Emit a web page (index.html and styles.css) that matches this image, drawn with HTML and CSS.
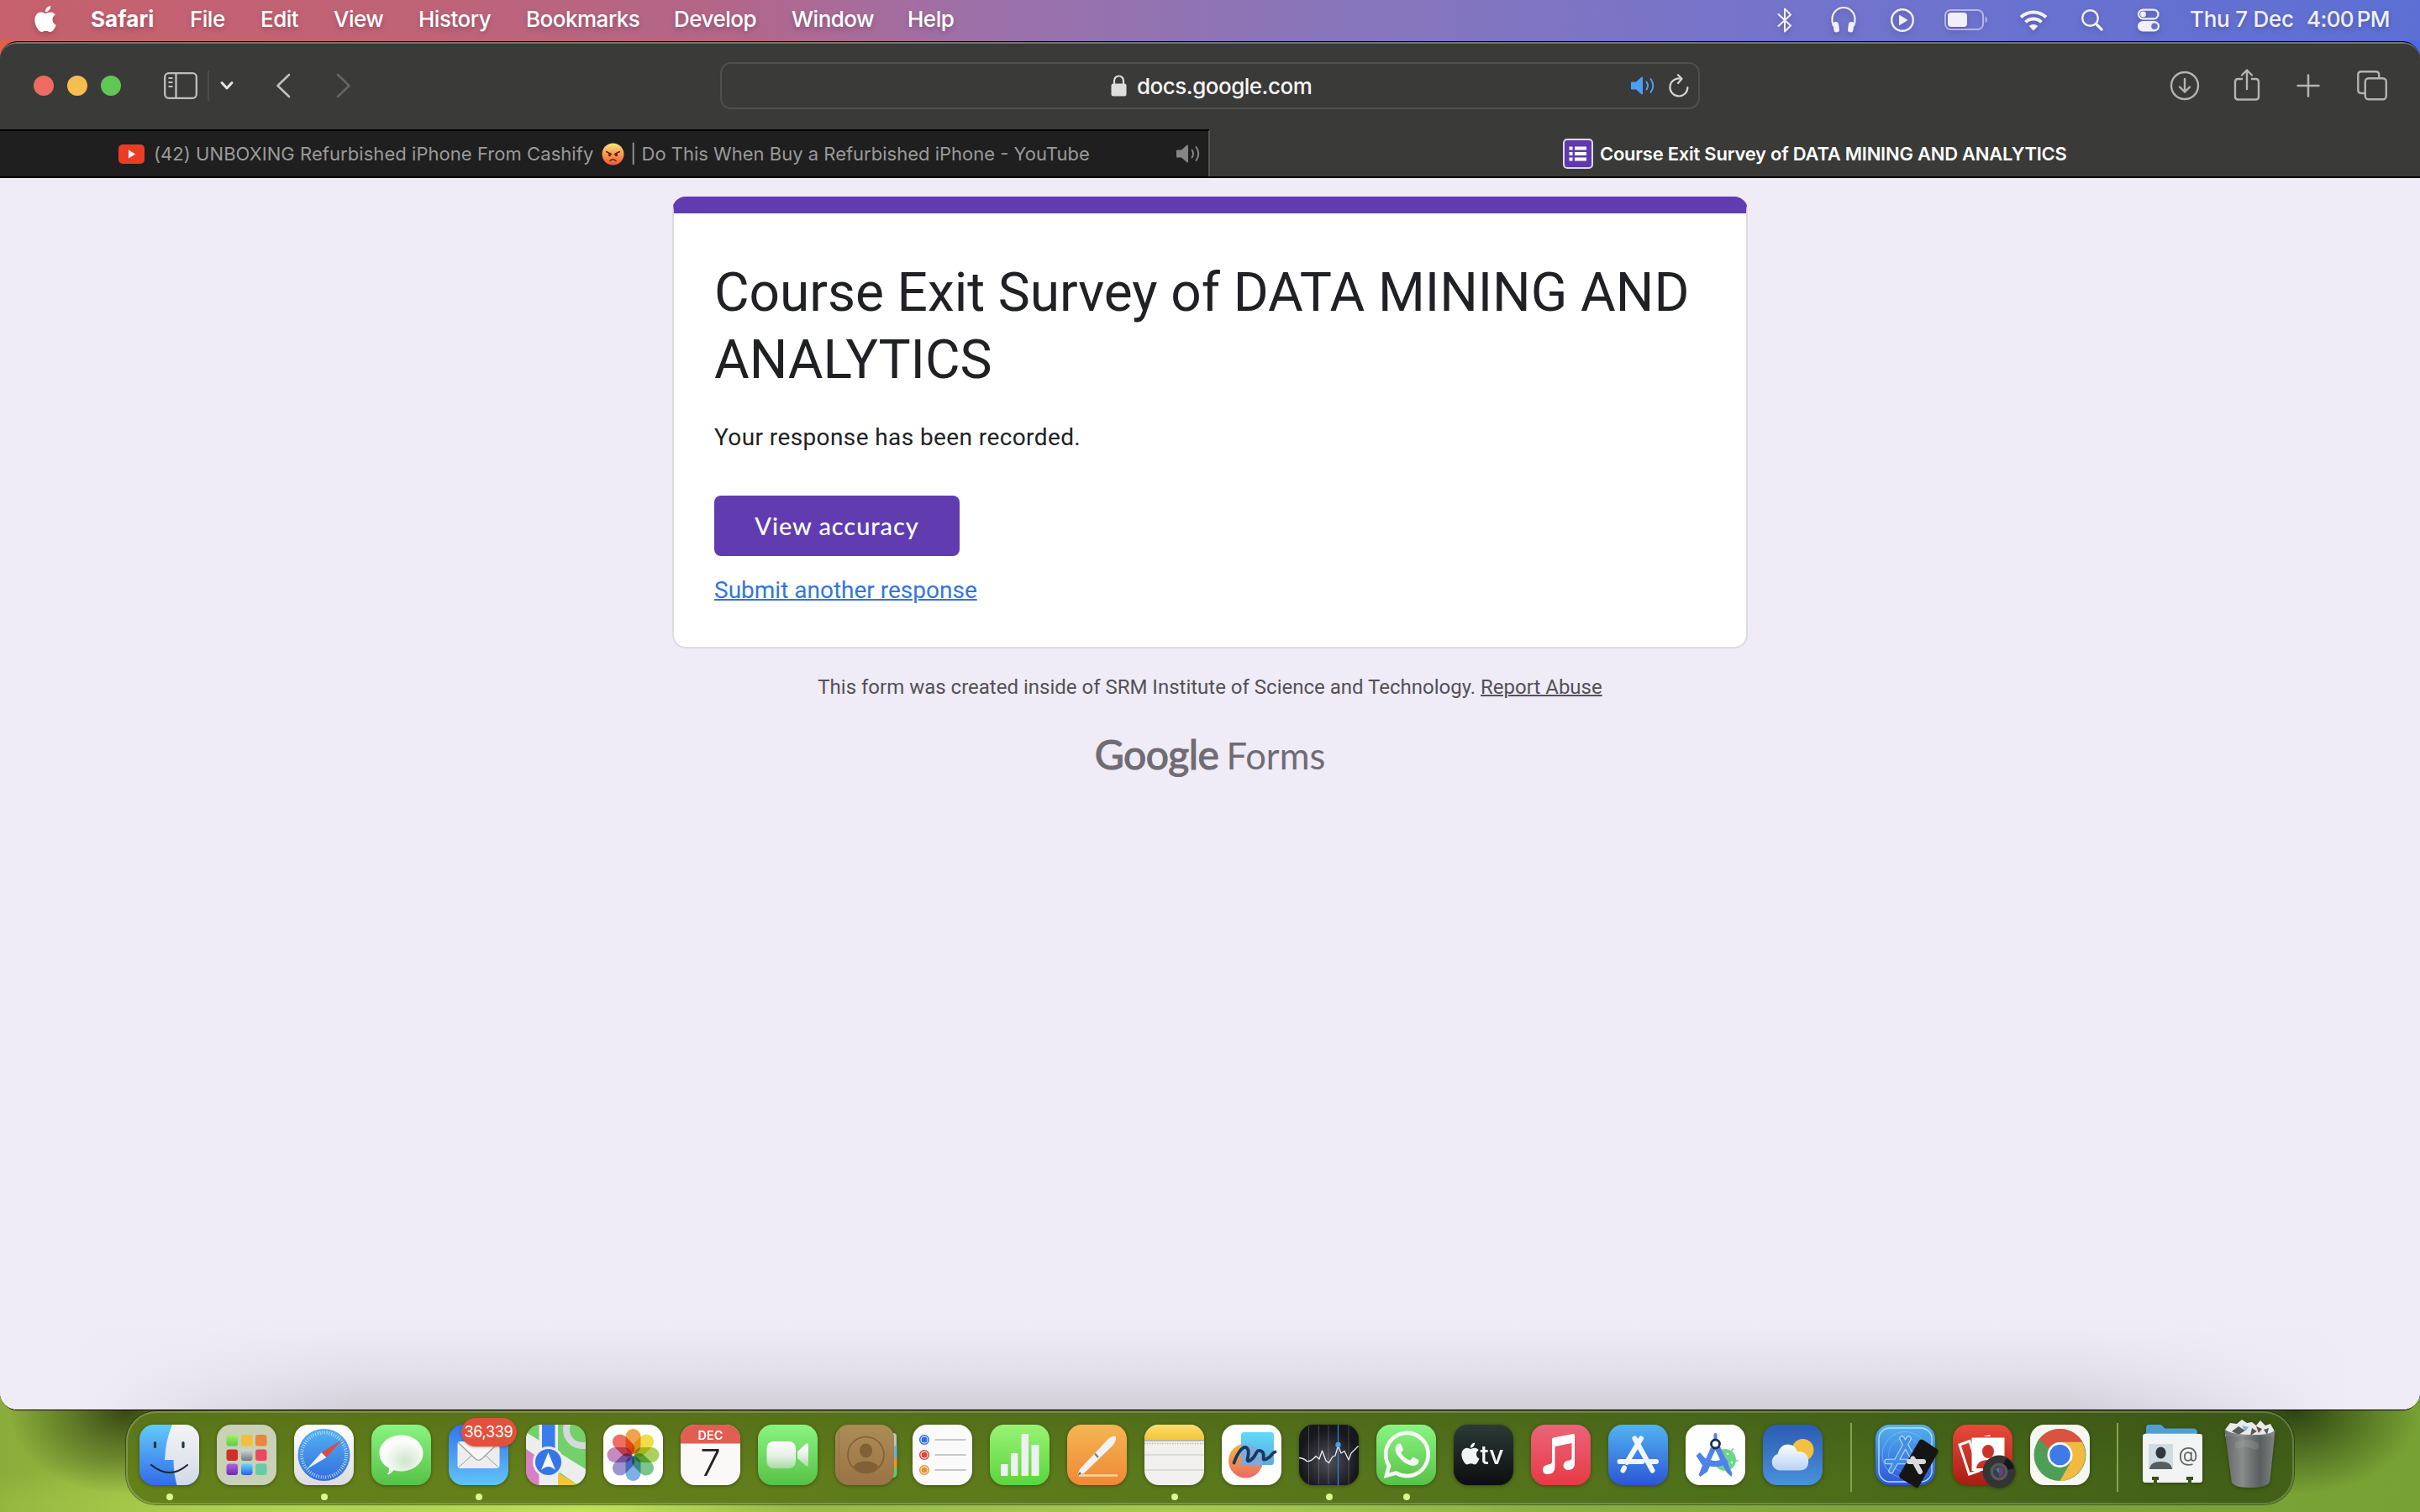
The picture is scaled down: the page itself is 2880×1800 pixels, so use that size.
FILE: index.html
```html
<!DOCTYPE html>
<html lang="en">
<head>
<meta charset="utf-8">
<title>Course Exit Survey of DATA MINING AND ANALYTICS</title>
<link rel="stylesheet" href="styles.css">
</head>
<body>
<svg class="defs" width="0" height="0" aria-hidden="true">
  <defs>
    <path id="apple" d="M12.152 6.896c-.948 0-2.415-1.078-3.96-1.04-2.04.027-3.91 1.183-4.961 3.014-2.117 3.675-.546 9.103 1.519 12.09 1.013 1.454 2.208 3.09 3.792 3.039 1.52-.065 2.09-.987 3.935-.987 1.831 0 2.35.987 3.96.948 1.637-.026 2.676-1.48 3.676-2.948 1.156-1.688 1.636-3.325 1.662-3.415-.039-.013-3.182-1.221-3.22-4.857-.026-3.04 2.48-4.494 2.597-4.559-1.429-2.09-3.623-2.324-4.39-2.376-2-.156-3.675 1.09-4.61 1.09zM15.53 3.83c.843-1.012 1.4-2.427 1.245-3.83-1.207.052-2.662.805-3.532 1.818-.78.896-1.454 2.338-1.273 3.714 1.338.104 2.715-.688 3.559-1.701"/>
    <g id="speaker">
      <path d="M0 7.5Q0 6.500 1 6.500H6L12.500.8Q14 0 14 1.700V20.300Q14 22 12.500 21.200L6 15.500H1Q0 15.500 0 14.500Z" fill="currentColor"/>
      <path d="M18.500 6.500Q21.500 11 18.500 15.500M23.500 3Q29 11 23.500 19" fill="none" stroke="currentColor" stroke-width="2" stroke-linecap="round"/>
    </g>
    <clipPath id="tile"><rect width="71" height="72" rx="17"/></clipPath>
    <linearGradient id="green" x2="0" y2="1"><stop stop-color="#8af483"/><stop offset="1" stop-color="#57c147"/></linearGradient>
    <linearGradient id="white" x2="0" y2="1"><stop stop-color="#fff"/><stop offset="1" stop-color="#dcdcdc"/></linearGradient>
    <linearGradient id="blueDown" x2="0" y2="1"><stop stop-color="#52b3f0"/><stop offset="1" stop-color="#2c56d6"/></linearGradient>
    <linearGradient id="finderBlue" x2="0" y2="1"><stop stop-color="#62cbfa"/><stop offset="1" stop-color="#346bea"/></linearGradient>
    <linearGradient id="finderWhite" x2="0" y2="1"><stop stop-color="#f4f4f5"/><stop offset="1" stop-color="#d2dae8"/></linearGradient>
    <linearGradient id="mailBlue" x2="0" y2="1"><stop stop-color="#3673ea"/><stop offset="1" stop-color="#5fc4fa"/></linearGradient>
    <linearGradient id="safariDial" x2="0" y2="1"><stop stop-color="#52b2f2"/><stop offset="1" stop-color="#336ddf"/></linearGradient>
    <linearGradient id="brown" x2="0" y2="1"><stop stop-color="#ad8c56"/><stop offset="1" stop-color="#9a7346"/></linearGradient>
    <linearGradient id="numbers" x2="0" y2="1"><stop stop-color="#98f373"/><stop offset="1" stop-color="#5dd43f"/></linearGradient>
    <linearGradient id="pages" x2="0" y2="1"><stop stop-color="#f5b552"/><stop offset="1" stop-color="#ee8936"/></linearGradient>
    <linearGradient id="notes" x2="0" y2="1"><stop stop-color="#fadf70"/><stop offset="1" stop-color="#f5c332"/></linearGradient>
    <linearGradient id="sunset" x2="0" y2="1"><stop stop-color="#f3b840"/><stop offset="1" stop-color="#ec6a64"/></linearGradient>
    <linearGradient id="sky" x2="0" y2="1"><stop stop-color="#62dafa"/><stop offset="1" stop-color="#5ba9de"/></linearGradient>
    <radialGradient id="stocks" cy=".6"><stop stop-color="#4e4f5b"/><stop offset="1" stop-color="#17181b"/></radialGradient>
    <linearGradient id="tv" x2="0" y2="1"><stop stop-color="#2c3a36"/><stop offset="1" stop-color="#0c0e10"/></linearGradient>
    <linearGradient id="music" x2="0" y2="1"><stop stop-color="#ea6579"/><stop offset="1" stop-color="#e73a45"/></linearGradient>
    <linearGradient id="weather" x2="0" y2="1"><stop stop-color="#2c5cb2"/><stop offset="1" stop-color="#4a91dc"/></linearGradient>
    <linearGradient id="cloud" x2="0" y2="1"><stop stop-color="#fdfdfb"/><stop offset="1" stop-color="#b9d2f6"/></linearGradient>
    <linearGradient id="red" x2="0" y2="1"><stop stop-color="#e74b3c"/><stop offset="1" stop-color="#a91d12"/></linearGradient>
    <linearGradient id="camera" x2="0" y2="1"><stop stop-color="#fff"/><stop offset=".5" stop-color="#e8f1e8"/><stop offset="1" stop-color="#a9dba4"/></linearGradient>
    <radialGradient id="bubble" cx=".6" cy=".65"><stop stop-color="#cfe6cb"/><stop offset="1" stop-color="#fbfdfb"/></radialGradient>
    <linearGradient id="bin"><stop stop-color="#66696c"/><stop offset=".35" stop-color="#8c9092"/><stop offset=".7" stop-color="#5c6063"/><stop offset="1" stop-color="#85898b"/></linearGradient>
    <linearGradient id="emoji" x2="0" y2="1"><stop stop-color="#fde67a"/><stop offset=".5" stop-color="#fb9a4c"/><stop offset="1" stop-color="#f2573e"/></linearGradient>
    <linearGradient id="padGreen" x2="0" y2="1"><stop stop-color="#a2f26c"/><stop offset="1" stop-color="#5ccc3d"/></linearGradient>
    <linearGradient id="padGrey" x2="0" y2="1"><stop stop-color="#d2d9de"/><stop offset="1" stop-color="#74787b"/></linearGradient>
    <linearGradient id="padBlue" x2="0" y2="1"><stop stop-color="#66d8fb"/><stop offset="1" stop-color="#2e5fe2"/></linearGradient>
    <linearGradient id="padPurple" x2="0" y2="1"><stop stop-color="#b661e6"/><stop offset="1" stop-color="#6a2bab"/></linearGradient>
  </defs>
</svg>

<div class="desktop">
  <header class="menubar">
    <svg class="apple" viewBox="2 0 20 24" preserveAspectRatio="none"><use href="#apple" fill="#fff"/></svg>
    <nav class="menus">
      <span class="menu menu-app">Safari</span><span class="menu">File</span><span class="menu">Edit</span><span class="menu">View</span><span class="menu">History</span><span class="menu">Bookmarks</span><span class="menu">Develop</span><span class="menu">Window</span><span class="menu">Help</span>
    </nav>
    <div class="status">
      <svg width="18" height="30" viewBox="0 0 18 30"><path d="M1.500 8L16 21.500 9 28.500V1.500L16 8.500 1.500 22" fill="none" stroke="#f0effa" stroke-width="2" stroke-linejoin="round" stroke-linecap="round"/></svg>
      <svg width="30" height="30" viewBox="0 0 30 30"><path d="M3 22Q1 17 1.500 13.500A13.500 13.500 0 0 1 28.500 13.500Q29 17 27 22" fill="none" stroke="#f0effa" stroke-width="2.200"/><rect x="3" y="17" width="6.500" height="12.500" rx="3" fill="#f0effa" transform="rotate(-8 6 23)"/><rect x="20.500" y="17" width="6.500" height="12.500" rx="3" fill="#f0effa" transform="rotate(8 24 23)"/></svg>
      <svg width="30" height="30" viewBox="0 0 30 30"><circle cx="15" cy="15" r="12.800" fill="none" stroke="#f0effa" stroke-width="2.400"/><path d="M11 9.800Q11 8.500 12.200 9.200L20.500 14.200Q21.500 15 20.500 15.800L12.200 20.800Q11 21.500 11 20.200Z" fill="#f0effa"/></svg>
      <svg width="52" height="26" viewBox="0 0 52 26"><rect x="1" y="1" width="45" height="23" rx="6.500" fill="none" stroke="#fff" stroke-opacity=".5" stroke-width="2"/><rect x="4" y="4" width="23" height="17" rx="4" fill="#f0effa"/><path d="M48.500 8.500Q51 9.500 51 12.500T48.500 16.500Z" fill="#fff" fill-opacity=".5"/></svg>
      <svg width="34" height="26" viewBox="0 0 34 26"><g fill="none" stroke="#f0effa" stroke-width="4"><path d="M2 9.500A21.500 21.500 0 0 1 32 9.500"/><path d="M7.500 15.300A13.500 13.500 0 0 1 26.500 15.300"/></g><path d="M17 25.500L11.700 20A8 8 0 0 1 22.300 20Z" fill="#f0effa"/></svg>
      <svg width="28" height="28" viewBox="0 0 28 28"><circle cx="11.500" cy="11.500" r="9.300" fill="none" stroke="#f0effa" stroke-width="2.400"/><path d="M18.500 18.500L25 25" stroke="#f0effa" stroke-width="3.200" stroke-linecap="round"/></svg>
      <svg width="28" height="28" viewBox="0 0 28 28"><rect x="2" y="1.700" width="23.500" height="10.600" rx="5.300" fill="none" stroke="#f0effa" stroke-width="2.200"/><circle cx="7.500" cy="7" r="3.400" fill="#f0effa"/><rect x="1" y="15" width="26" height="12.500" rx="6.200" fill="#f0effa"/><circle cx="21" cy="21.200" r="3.800" fill="#6a70cf"/></svg>
      <span class="date">Thu 7 Dec</span>
      <span class="time">4:00&#8201;PM</span>
    </div>
  </header>

  <section class="window">
    <div class="toolbar">
      <div class="lights"><i class="light close"></i><i class="light minimise"></i><i class="light zoom"></i></div>
      <div class="side-tools">
        <svg width="40" height="32" viewBox="0 0 40 32" fill="none" stroke="#bfbfbe" stroke-width="2.300"><rect x="1.200" y="1.200" width="37.600" height="29.600" rx="4.500"/><path d="M14.500 1V31"/><path d="M5.500 7H10.500M5.500 12H10.500M5.500 17H10.500" stroke-width="2"/></svg>
        <i class="tool-rule"></i>
        <svg width="16" height="12" viewBox="0 0 16 12"><path d="M2 2.500L8 9 14 2.500" fill="none" stroke="#e4e4e3" stroke-width="3" stroke-linecap="round" stroke-linejoin="round"/></svg>
      </div>
      <div class="history">
        <svg width="18" height="30" viewBox="0 0 18 30"><path d="M16 2L2.500 15 16 28" fill="none" stroke="#bfbfbe" stroke-width="2.600" stroke-linecap="round" stroke-linejoin="round"/></svg>
        <svg width="18" height="30" viewBox="0 0 18 30"><path d="M2 2L15.500 15 2 28" fill="none" stroke="#656564" stroke-width="2.600" stroke-linecap="round" stroke-linejoin="round"/></svg>
      </div>
      <div class="address">
        <svg class="lock" width="19" height="26" viewBox="0 0 19 26"><path d="M4 12V7A5.500 5.500 0 0 1 15 7V12" fill="none" stroke="#dededd" stroke-width="2.200"/><rect x=".5" y="10.500" width="18" height="15" rx="2.500" fill="#dededd"/></svg>
        <span class="host">docs.google.com</span>
        <svg class="sound" width="30" height="22" viewBox="0 0 30 22"><use href="#speaker"/></svg>
        <svg width="24" height="28" viewBox="0 0 24 28" fill="none" stroke="#d5d5d4" stroke-width="2.200" stroke-linecap="round" stroke-linejoin="round"><path d="M14.500 5.800A10.500 10.500 0 1 0 22.400 16"/><path d="M11 1.200L15.500 5.800 11 11"/></svg>
      </div>
      <div class="actions">
        <svg width="36" height="36" viewBox="0 0 36 36" fill="none" stroke="#b4b4b3" stroke-width="2.400" stroke-linecap="round" stroke-linejoin="round"><circle cx="18" cy="18" r="16"/><path d="M18 10V25.500M12 19.500L18 25.500 24 19.500"/></svg>
        <svg class="share" width="32" height="40" viewBox="0 0 32 40" fill="none" stroke="#b4b4b3" stroke-width="2.400" stroke-linecap="round" stroke-linejoin="round"><path d="M10 13H5.500Q2 13 2 16.500V34Q2 37.500 5.500 37.500H26.500Q30 37.500 30 34V16.500Q30 13 26.500 13H22"/><path d="M16 25V2.500M10 8.500L16 2.500 22 8.500"/></svg>
        <svg class="plus" width="28" height="28" viewBox="0 0 28 28"><path d="M14 1.500V26.500M1.500 14H26.500" stroke="#b4b4b3" stroke-width="2.500" stroke-linecap="round"/></svg>
        <svg width="36" height="36" viewBox="0 0 36 36" fill="none" stroke="#b4b4b3" stroke-width="2.400" stroke-linejoin="round"><rect x="9.800" y="9.300" width="25" height="25" rx="4"/><path d="M9.500 27H5Q1.300 27 1.300 23.300V5Q1.300 1.300 5 1.300H22.500Q26.200 1.300 26.200 5V9"/></svg>
      </div>
    </div>

    <div class="tabs">
      <div class="tab tab-idle">
        <svg width="31" height="23" viewBox="0 0 31 23"><rect width="31" height="23" rx="5" fill="#ea3d25"/><path d="M12 6.500L20 11.500 12 16.500Z" fill="#fff"/></svg>
        <span class="tab-a">(42) UNBOXING Refurbished iPhone From Cashify</span>
        <svg class="emoji" width="27" height="27" viewBox="0 0 27 27"><circle cx="13.500" cy="13.500" r="13" fill="url(#emoji)"/><path d="M5.500 10.500L11.500 13.500M21.500 10.500L15.500 13.500" stroke="#5e2518" stroke-width="1.600" stroke-linecap="round"/><circle cx="9.500" cy="14.500" r="1.700" fill="#5e2518"/><circle cx="17.500" cy="14.500" r="1.700" fill="#5e2518"/><path d="M10 21.500Q13.500 18 17 21.500" fill="none" stroke="#5e2518" stroke-width="1.600" stroke-linecap="round"/></svg>
        <span class="tab-b">| Do This When Buy a Refurbished iPhone - YouTube</span>
        <svg class="tab-sound" width="30" height="22" viewBox="0 0 30 22"><use href="#speaker"/></svg>
      </div>
      <div class="tab tab-live">
        <svg width="36" height="36" viewBox="0 0 36 36"><rect x="1" y="1" width="34" height="34" rx="4" fill="#6039b0" stroke="#dcd8e8" stroke-width="2"/><path d="M7.500 11.500H11.500M14 11.500H28M7.500 18H11.500M14 18H28M7.500 24.500H11.500M14 24.500H28" stroke="#fff" stroke-width="4"/></svg>
        <span class="tab-c">Course Exit Survey of DATA MINING AND ANALYTICS</span>
      </div>
    </div>

    <main class="page">
      <article class="card">
        <h1 class="title">Course Exit Survey of DATA MINING AND ANALYTICS</h1>
        <p class="message">Your response has been recorded.</p>
        <a class="button">View accuracy</a>
        <a class="again">Submit another response</a>
      </article>
      <p class="origin">This form was created inside of SRM Institute of Science and Technology. <a class="abuse">Report Abuse</a></p>
      <div class="brand"><span class="brand-google">Google</span><span class="brand-forms">Forms</span></div>
    </main>
  </section>

  <footer class="shelf">
    <div class="dock">
      <div class="app running"><svg class="icon" viewBox="0 0 71 72"><g clip-path="url(#tile)"><rect width="71" height="72" fill="url(#finderBlue)"/><path d="M39 0Q31 18 30 42H40.500Q40.500 58 44.500 72H71V0Z" fill="url(#finderWhite)"/></g><path d="M18.500 21.500V26.500M52 21.500V26.500" stroke="#26313c" stroke-width="3.200" stroke-linecap="round"/><path d="M14 48Q36 66 57 48" fill="none" stroke="#1b2430" stroke-width="2" stroke-linecap="round"/></svg></div>
      <div class="app"><svg class="icon" viewBox="0 0 71 72"><rect width="71" height="72" rx="17" fill="#c9d1b6"/><g><rect x="11.500" y="12" width="13.500" height="13.500" rx="3" fill="url(#padGreen)"/><rect x="29" y="12" width="13.500" height="13.500" rx="3" fill="#f3bd3d"/><rect x="46" y="12" width="13.500" height="13.500" rx="3" fill="#e6873a"/><rect x="11.500" y="29.500" width="13.500" height="13.500" rx="3" fill="#cf3126"/><rect x="29" y="29.500" width="13.500" height="13.500" rx="3" fill="url(#padGrey)"/><rect x="46" y="29.500" width="13.500" height="13.500" rx="3" fill="#e94a62"/><rect x="11.500" y="46.500" width="13.500" height="13.500" rx="3" fill="url(#padPurple)"/><rect x="29" y="46.500" width="13.500" height="13.500" rx="3" fill="url(#padBlue)"/><rect x="46" y="46.500" width="13.500" height="13.500" rx="3" fill="#65cca4"/></g></svg></div>
      <div class="app running"><svg class="icon" viewBox="0 0 71 72"><rect width="71" height="72" rx="17" fill="url(#white)"/><circle cx="35.500" cy="36" r="31" fill="url(#safariDial)"/><circle cx="35.500" cy="36" r="26.500" fill="none" stroke="#d5e8fb" stroke-width="4" stroke-dasharray=".8 1.970"/><path d="M57 18L32.500 33.300 38.500 39Z" fill="#e2473d"/><path d="M15 53L32.500 33.300 38.500 39Z" fill="#f0f1f3"/></svg></div>
      <div class="app"><svg class="icon" viewBox="0 0 71 72"><rect width="71" height="72" rx="17" fill="url(#green)"/><path d="M35.500 12.500C50 12.500 61.500 22 61.500 34S50 55.500 35.500 55.500Q30.500 55.500 26.500 54.200 23.500 58.500 19 59.500 21.500 56 21 51.800C14 48 9.500 41.500 9.500 34 9.500 22 21 12.500 35.500 12.500Z" fill="url(#bubble)"/></svg></div>
      <div class="app running"><svg class="icon" viewBox="0 0 71 72"><rect width="71" height="72" rx="17" fill="url(#mailBlue)"/><rect x="10.500" y="20" width="50" height="32" rx="3.500" fill="#ededee"/><path d="M11.500 51L27 37M59.500 51L44 37" stroke="#9c9d9f" stroke-width="1"/><path d="M11.500 21.500L31.500 40.500Q35.500 44 39.500 40.500L59.500 21.500" fill="#f7f7f7" stroke="#9c9d9f" stroke-width="1.200"/></svg><span class="badge">36,339</span></div>
      <div class="app"><svg class="icon" viewBox="0 0 71 72"><g clip-path="url(#tile)"><rect width="71" height="72" fill="#73d06a"/><path d="M0 28L22 44V72H0Z" fill="#d97fc4"/><path d="M36 56L62 72H36Z" fill="#f2c53d"/><path d="M0 9L71 53V72H62L0 29Z" fill="#eceded"/><circle cx="67" cy="6" r="19" fill="none" stroke="#d5d8dc" stroke-width="8"/><rect x="15.500" width="22.500" height="72" fill="#edeeef"/><rect x="19" width="15.500" height="40" fill="#3a7cec"/></g><circle cx="26.500" cy="44.500" r="18.500" fill="#e9edf2"/><circle cx="26.500" cy="44.500" r="15.500" fill="#3575e8"/><path d="M26.500 33L35 54Q30 50 26.500 50T18 54Z" fill="#f5f6f8"/></svg></div>
      <div class="app"><svg class="icon" viewBox="0 0 71 72"><rect width="71" height="72" rx="17" fill="#fefefe"/><g class="petals"><rect x="26.500" y="5" width="18" height="30" rx="9" fill="#f29a35"/><rect x="26.500" y="5" width="18" height="30" rx="9" fill="#efdc36" transform="rotate(45 35.500 36)"/><rect x="26.500" y="5" width="18" height="30" rx="9" fill="#a5cb4b" transform="rotate(90 35.500 36)"/><rect x="26.500" y="5" width="18" height="30" rx="9" fill="#6cbf83" transform="rotate(135 35.500 36)"/><rect x="26.500" y="5" width="18" height="30" rx="9" fill="#6ba9e2" transform="rotate(180 35.500 36)"/><rect x="26.500" y="5" width="18" height="30" rx="9" fill="#9389cb" transform="rotate(225 35.500 36)"/><rect x="26.500" y="5" width="18" height="30" rx="9" fill="#c07fb9" transform="rotate(270 35.500 36)"/><rect x="26.500" y="5" width="18" height="30" rx="9" fill="#ec5f53" transform="rotate(315 35.500 36)"/></g></svg></div>
      <div class="app"><svg class="icon" viewBox="0 0 71 72"><g clip-path="url(#tile)"><rect width="71" height="72" fill="#faf9f8"/><rect width="71" height="22.500" fill="#e25d52"/></g><text class="cal-month" x="35.500" y="17.500">DEC</text><text class="cal-day" x="35.500" y="60.500">7</text></svg></div>
      <div class="app"><svg class="icon" viewBox="0 0 71 72"><rect width="71" height="72" rx="17" fill="url(#green)"/><rect x="10.500" y="20" width="34.500" height="32" rx="8" fill="url(#camera)"/><path d="M47 32L57 23Q60 21 60 24.500V47.500Q60 51 57 49L47 40Z" fill="url(#camera)"/></svg></div>
      <div class="app"><svg class="icon" viewBox="0 0 71 72"><rect x="60" y="10" width="13" height="18" rx="4" fill="#c4c3bd"/><path d="M66 25H73.500V39H66Z" fill="#5eb2df"/><path d="M66 39H73.500V51H66Z" fill="#e9932f"/><path d="M66 51H73.500V59Q73 63 66 64Z" fill="#6ac763"/><rect width="70" height="72" rx="16" fill="url(#brown)"/><path d="M4.500 5V67" stroke="#84663a" stroke-opacity=".5"/><circle cx="36.500" cy="36" r="21.500" fill="none" stroke="#7f6037" stroke-width="1.600"/><ellipse cx="36.500" cy="31" rx="7.500" ry="8.500" fill="#7f6037"/><path d="M21.500 50Q26 43.500 36.500 43.500T51.500 50Q45 58 36.500 58T21.500 50Z" fill="#7f6037"/></svg></div>
      <div class="app"><svg class="icon" viewBox="0 0 71 72"><rect width="71" height="72" rx="17" fill="#fbfafa"/><g fill="none" stroke-width="1.500"><circle cx="14" cy="18" r="5.300" stroke="#2f6ee6"/><circle cx="14" cy="36" r="5.300" stroke="#e2463d"/><circle cx="14" cy="54" r="5.300" stroke="#e8922f"/></g><circle cx="14" cy="18" r="3.500" fill="#2f6ee6"/><circle cx="14" cy="36" r="3.500" fill="#e2463d"/><circle cx="14" cy="54" r="3.500" fill="#e8922f"/><path d="M26.500 18H63.500M26.500 36H63.500M26.500 54H63.500" stroke="#b6b6b8" stroke-width="1.300"/></svg></div>
      <div class="app"><svg class="icon" viewBox="0 0 71 72"><rect width="71" height="72" rx="17" fill="url(#numbers)"/><path d="M13 47H21.500V61H13ZM25 34H33.500V61H25ZM37.500 11H46V61H37.500ZM49.500 24H58.500V61H49.500Z" fill="#eef0f1"/></svg></div>
      <div class="app"><svg class="icon" viewBox="0 0 71 72"><rect width="71" height="72" rx="17" fill="url(#pages)"/><path d="M14 60.500H60" stroke="#fbd6a4" stroke-width="2.500"/><path d="M12 61L15 53 49 17Q57 11 58 15 58.500 19 54 25L20 58Z" fill="#f2f2f3"/><path d="M33 34.500L37 39" stroke="#777" stroke-width="2"/><path d="M12 61L15 56 17 58.500Z" fill="#666"/></svg></div>
      <div class="app running"><svg class="icon" viewBox="0 0 71 72"><g clip-path="url(#tile)"><rect width="71" height="72" fill="#f1f0ee"/><rect width="71" height="18.500" fill="url(#notes)"/><path d="M0 19H71" stroke="#aaa69c" stroke-width="1.600"/><path d="M0 22.500H71" stroke="#bdbab5" stroke-width="1.600" stroke-dasharray="1.500 1.500"/><path d="M0 36H71M0 54H71" stroke="#d4d3d0" stroke-width="1.500"/></g></svg></div>
      <div class="app"><svg class="icon" viewBox="0 0 71 72"><rect width="71" height="72" rx="17" fill="#fff"/><circle cx="28.500" cy="43" r="20.500" fill="url(#sunset)"/><rect x="23" y="9" width="39" height="39" rx="3.500" fill="url(#sky)"/><path d="M23 48V24Q42 22 48 39Q49 44 48 48Z" fill="#8aa6dc" fill-opacity=".75"/><path d="M14.500 45.500C19 33 26 23 30.500 28.500S26 47 34 42.500 40 28 47 31.500 45 44 53 41 58 34 63.500 32.500" fill="none" stroke="#17395f" stroke-width="3.800" stroke-linecap="round"/></svg></div>
      <div class="app running"><svg class="icon" viewBox="0 0 71 72"><rect width="71" height="72" rx="17" fill="url(#stocks)"/><path d="M11.500 2V70M23.500 1V71M35 1V71M59 1V71" stroke="#fff" stroke-opacity=".2"/><path d="M46.500 0V72" stroke="#2f86d2" stroke-width="1.300"/><path d="M0 39.500Q6 40 9 43.500 14 44.500 20 37.500L24 41 27.500 31 32 43 35.500 45.500 40 38 43 37 46.500 25 50 34 54 31.500 59 42 62 34 70.500 25.500" fill="none" stroke="#ececee" stroke-width="1.300" stroke-linejoin="round"/><circle cx="46.500" cy="24" r="3.200" fill="#4a9fe8"/></svg></div>
      <div class="app running"><svg class="icon" viewBox="0 0 71 72"><rect width="71" height="72" rx="17" fill="url(#green)"/><g transform="translate(8.500 7.500) scale(2.320 2.350)"><path fill="#f4f6f3" d="M17.472 14.382c-.297-.149-1.758-.867-2.03-.967-.273-.099-.471-.148-.67.15-.197.297-.767.966-.94 1.164-.173.199-.347.223-.644.075-.297-.15-1.255-.463-2.390-1.475-.883-.788-1.480-1.761-1.653-2.059-.173-.297-.018-.458.13-.606.134-.133.298-.347.446-.52.149-.174.198-.298.298-.497.099-.198.05-.371-.025-.52-.075-.149-.669-1.612-.916-2.207-.242-.579-.487-.5-.669-.51-.173-.008-.371-.01-.57-.01-.198 0-.52.074-.792.372-.272.297-1.040 1.016-1.040 2.479 0 1.462 1.065 2.875 1.213 3.074.149.198 2.096 3.200 5.077 4.487.709.306 1.262.489 1.694.625.712.227 1.360.195 1.871.118.571-.085 1.758-.719 2.006-1.413.248-.694.248-1.289.173-1.413-.074-.124-.272-.198-.57-.347m-5.421 7.403h-.004a9.870 9.870 0 01-5.031-1.378l-.361-.214-3.741.982.998-3.648-.235-.374a9.860 9.860 0 01-1.510-5.260c.001-5.450 4.436-9.884 9.888-9.884 2.640 0 5.122 1.030 6.988 2.898a9.825 9.825 0 012.893 6.994c-.003 5.450-4.437 9.884-9.885 9.884m8.413-18.297A11.815 11.815 0 0012.050 0C5.495 0 .16 5.335.157 11.892c0 2.096.547 4.142 1.588 5.945L.057 24l6.305-1.654a11.882 11.882 0 005.683 1.448h.005c6.554 0 11.890-5.335 11.893-11.893a11.821 11.821 0 00-3.480-8.413Z"/></g></svg></div>
      <div class="app"><svg class="icon" viewBox="0 0 71 72"><rect width="71" height="72" rx="17" fill="url(#tv)"/><use href="#apple" fill="#f3f4f4" transform="translate(7 21.500) scale(1.080)"/><text class="tv-word" x="31.500" y="46.500">tv</text></svg></div>
      <div class="app"><svg class="icon" viewBox="0 0 71 72"><rect width="71" height="72" rx="17" fill="url(#music)"/><path d="M25 17.500Q25 16 26.500 15.600L50 11Q52 10.700 52 12.500V46Q52 53.500 45 54 39 54 38.500 48.800 38.500 43.500 45 42.500 48.500 42 48.500 39.500V22L28.500 26V50Q28.500 58.500 20 59 14 59 14 53.500 14.200 48.500 20.500 47.500 25 47 25 44Z" fill="#fff"/></svg></div>
      <div class="app"><svg class="icon" viewBox="0 0 71 72"><rect width="71" height="72" rx="17" fill="url(#blueDown)"/><g stroke="#f1f5fa" stroke-width="6" stroke-linecap="round"><path d="M39 16.500L22 45M19 51.500L17.500 54.500"/><path d="M31.500 16.500L52.500 54.500"/><path d="M13.500 44H40.500M50 44H57"/></g></svg></div>
      <div class="app"><svg class="icon" viewBox="0 0 71 72"><rect width="71" height="72" rx="17" fill="#fff"/><circle cx="47" cy="42" r="13" fill="#6bd58a"/><path d="M52 34L57 28.500M58 43H63" stroke="#6bd58a" stroke-width="1.500"/><circle cx="50" cy="35" r="1.300" fill="#fff"/><circle cx="55" cy="45" r="1.300" fill="#fff"/><path d="M35.500 12V18" stroke="#4f83ea" stroke-width="4" stroke-linecap="round"/><path d="M30 27L38 28 26 56 17.500 62 15.500 60 20 48.500 12.500 37 17 33 24 41Z" fill="#4f83ea"/><path d="M33 27L41 26 55.500 58 54.500 62 49 57Z" fill="#4f83ea"/><path d="M22 43Q36 51 49 42" fill="none" stroke="#4f83ea" stroke-width="7"/><path d="M35.500 30L41 42Q36 44 30 42Z" fill="#fff"/><circle cx="35.500" cy="23" r="5" fill="#fff" stroke="#15344a" stroke-width="2.800"/></svg></div>
      <div class="app"><svg class="icon" viewBox="0 0 71 72"><rect width="71" height="72" rx="17" fill="url(#weather)"/><circle cx="47.500" cy="30" r="13" fill="#f2c13f"/><path d="M20 54.500A10 10 0 0 1 17.500 35Q20 23.500 30 23.500 38.500 24 41 32 52 31 54 41 55.500 54.500 43 54.500Z" fill="url(#cloud)"/></svg></div>
      <i class="dock-rule dock-rule-first"></i>
      <div class="app"><svg class="icon" viewBox="0 0 71 72"><rect width="71" height="72" rx="17" fill="url(#blueDown)"/><rect x="4" y="4" width="63" height="64" rx="13" fill="none" stroke="#bfe0fa" stroke-width="1.300"/><circle cx="35.500" cy="36" r="27.500" fill="none" stroke="#8cc5f4" stroke-opacity=".6"/><circle cx="35.500" cy="36" r="20" fill="none" stroke="#8cc5f4" stroke-opacity=".4"/><g stroke="#bfe0fa" stroke-width="6.500" stroke-linecap="round"><path d="M39.500 16.500L18.500 55M31.500 16.500L53 55M13.500 44H57"/></g><g stroke="#428fe6" stroke-width="4.500" stroke-linecap="round"><path d="M39.500 16.500L18.500 55M31.500 16.500L53 55M13.500 44H57"/></g><path d="M52 19Q54 16.500 56.500 18L73 29Q75.500 31 74 33.500L52 73Q50.500 76 47.500 74.500L30 64Q27 62 28.500 59.500Z" fill="#151515"/><path d="M44.500 40.500L53 56M40 44H57" stroke="#d9d9d9" stroke-width="6" stroke-linecap="round"/></svg></div>
      <div class="app"><svg class="icon" viewBox="0 0 71 72"><rect width="71" height="72" rx="17" fill="url(#red)"/><path d="M8 24L20 19.500 31 55 19.500 59Z" fill="none" stroke="#fff" stroke-width="3"/><path d="M36 14L44 12 45 14Z" fill="#fff"/><rect x="22.500" y="15.500" width="39" height="39.500" fill="#fff"/><ellipse cx="42" cy="32" rx="7" ry="8" fill="#cd3226"/><path d="M28 52Q29 42 42 42T56 52Z" fill="#cd3226"/><circle cx="55" cy="56" r="19.500" fill="#343434"/><path d="M55 56L64 40A18 18 0 0 1 73 52Z" fill="#171717"/><circle cx="55" cy="56" r="10.500" fill="#58585a"/><circle cx="55" cy="56" r="7" fill="#32404e"/><path d="M55 50A6 6 0 0 1 55 62Z" fill="#6b3e74"/><path d="M51 53L55 51V58Z" fill="#3e8a72"/></svg></div>
      <div class="app"><svg class="icon" viewBox="0 0 71 72"><rect width="71" height="72" rx="17" fill="#f6f6f2"/><circle cx="35.500" cy="36" r="31" fill="#4d9f57"/><path d="M35.500 20.500H61.500A31 31 0 0 1 35.500 67L49 43.500Z" fill="#f2bb40"/><path d="M8.700 20.500A31 31 0 0 1 62.300 20.500H35.500A15.500 15.500 0 0 0 22 43.500Z" fill="#da5240"/><path d="M11 17.500L8.700 20.500 22 43.500A15.500 15.500 0 0 1 22 28Z" fill="#4d9f57"/><circle cx="35.500" cy="36" r="15" fill="#fff"/><circle cx="35.500" cy="36" r="12.300" fill="#4079e8"/></svg></div>
      <i class="dock-rule"></i>
      <div class="app"><svg class="icon" viewBox="0 0 71 72"><path d="M4 4Q4 0 8 0H20Q23 0 25 3L26 4.500H60Q65 4.500 65 9V20H4Z" fill="#4f9fd3"/><rect x="2" y="10" width="63" height="20" rx="3" fill="#6ebbec"/><path d="M0 14Q0 11 3 11H68Q71 11 71 14V66Q71 69 68 69H58V66H60V62H52V66H54V69H17V66H19V62H11V66H13V69H3Q0 69 0 66Z" fill="#f2f3f3"/><rect x="7" y="23" width="29" height="30" fill="#cfdde3"/><ellipse cx="21.500" cy="33.500" rx="6" ry="7" fill="#32383c"/><path d="M8 53Q9 44 21.500 44T35 53Z" fill="#565d61"/><text class="at" x="54" y="44">@</text></svg></div>
      <div class="app"><svg class="icon" viewBox="0 0 71 72"><path d="M6 6L12-2 20-1 26-6 32-2 38-3 43 1 48-5 54 1 60-1 64 6V14H6Z" fill="#e9eaea"/><path d="M14 8L22 2 30 7 22 12ZM38 4L44 8 36 13ZM52 6L58 4 56 12Z" fill="#5c5a58"/><path d="M26 1L34 3 30 8Z" fill="#7fb8d8"/><path d="M43 2L50 5 46 10Z" fill="#6d4a41"/><path d="M5 3Q5 11 36 12T66 3L59.500 66Q59 75 36 75T13.500 66Z" fill="url(#bin)" fill-opacity=".95"/><path d="M22 24Q32 20 42 25" fill="none" stroke="#c2c6c8" stroke-opacity=".16" stroke-width="9" stroke-linecap="round"/></svg></div>
    </div>
  </footer>
</div>
</body>
</html>
```
FILE: styles.css
```css
* { box-sizing: border-box; }
body { margin: 0; }
svg { display: block; flex: none; overflow: visible; }
.defs { position: absolute; }

.desktop {
  width: 2880px;
  height: 1800px;
  overflow: hidden;
  display: flex;
  flex-direction: column;
  font-family: Inter, "Liberation Sans", sans-serif;
  background:
    linear-gradient(90deg, #e0604a 0, #cf5a63 900px, #7b74d8 1400px, #4f68e6 2880px) 0 0 / 100% 120px no-repeat,
    radial-gradient(260px 60px at 690px 1800px, #bfe258, transparent),
    radial-gradient(500px 70px at 380px 1800px, #b2d650, transparent),
    radial-gradient(420px 60px at 1400px 1800px, #a6cb50, transparent),
    linear-gradient(90deg, #8aac3a 0, #9cc046 300px, #93b945 1500px, #7ea53a 2200px, #78a134 2880px);
}

/* Menu bar */
.menubar {
  flex: none;
  height: 48px;
  display: flex;
  align-items: center;
  padding: 0 0 0 41px;
  color: #fff;
  font-size: 26px;
  font-weight: 500;
  line-height: 46px;
  white-space: nowrap;
  text-shadow: 0 3px 6px rgba(0, 0, 0, .2);
  background: linear-gradient(90deg, #c6616d 0, #bf6377 500px, #b26689 870px, #9d70a8 1160px, #8775ba 1600px, #7774ca 2060px, #6a72cf 2400px, #5d6fd4 2880px);
}
.menubar svg { filter: drop-shadow(0 3px 3px rgba(0, 0, 0, .18)); }
.apple { width: 26px; height: 31px; margin-bottom: 3px; }
.menus {
  margin: -2px 0 0 41px;
  display: grid;
  grid-template-columns: 118px 84px 87px 101px 128px 176px 140px 138px 100px;
  letter-spacing: -.5px;
}
.menu-app { font-weight: 700; letter-spacing: .1px; }
.status {
  margin-left: auto;
  display: grid;
  align-items: center;
  grid-template-columns: 64px 70px 65px 89px 73px 67px 63px 139px 135px;
  color: #f0effa;
  letter-spacing: -.25px;
}
.date, .time { margin-top: -2px; }
.time { letter-spacing: -.65px; }

/* Browser window */
.window {
  flex: none;
  height: 1630px;
  margin-top: 1px;
  display: flex;
  flex-direction: column;
  border-radius: 21px;
  overflow: hidden;
  background: #3a3a38;
  border: 1px solid #000;
  border-width: 1px 0;
}
.toolbar {
  flex: none;
  height: 104px;
  display: flex;
  align-items: center;
  padding: 0 39px 2px 40px;
  border-top: 2px solid #747473;
  border-radius: 20px 20px 0 0;
}
.lights { display: flex; gap: 16px; width: 155px; }
.light { width: 24px; height: 24px; border-radius: 50%; }
.close { background: #ed6b60; }
.minimise { background: #f5be4f; }
.zoom { background: #62c655; }
.side-tools { display: flex; align-items: center; width: 133px; }
.tool-rule { width: 2px; height: 36px; margin: 0 13px 0 12px; background: #4d4d4b; }
.history { display: flex; gap: 54px; width: 529px; }
.address {
  width: 1166px;
  height: 56px;
  display: flex;
  align-items: center;
  border: 2px solid #50504f;
  border-radius: 13px;
  padding: 0 11px 0 463px;
  color: #f6f6f6;
  font-size: 26px;
  font-weight: 500;
  letter-spacing: -.5px;
}
.host { margin-left: 12px; width: 590px; }
.sound { margin-right: 15px; color: #4b9ff5; }
.actions { margin-left: auto; display: flex; align-items: center; }
.share { margin: 0 43px 2px 40px; }
.plus { margin-right: 44px; }

.tabs { flex: none; height: 58px; display: grid; grid-template-columns: 1440px 1440px; border-bottom: 2px solid #000; font-size: 22px; white-space: nowrap; }
.tab { display: flex; align-items: center; }
.tab-idle { background: #1f1f1f; border-top: 2px solid #000; border-right: 2px solid #555553; color: #9a9a9a; padding: 0 8px 0 141px; }
.tab-a { margin-left: 11px; width: 533px; letter-spacing: .05px; }
.tab-b { margin-left: 7px; }
.tab-sound { margin-left: auto; color: #858585; }
.tab-live { color: #fff; font-weight: 600; padding: 2px 0 0 420px; }
.tab-c { margin-left: 8px; letter-spacing: -.25px; }

/* Form page */
.page {
  flex: 1;
  padding-top: 22px;
  display: flex;
  flex-direction: column;
  align-items: center;
  font-family: Roboto, "Liberation Sans", sans-serif;
  background:
    linear-gradient(90deg, #efebf7 90px, transparent 420px, transparent 2460px, #efebf7 2790px),
    linear-gradient(#efebf7 0, #efebf7 1365px, #e3dfea 1422px, #d2cfd9 1466px);
}
.card {
  flex: none;
  width: 1280px;
  height: 538px;
  padding: 55px 48px 0;
  display: flex;
  flex-direction: column;
  align-items: flex-start;
  background: #fff;
  border: 2px solid #dadce0;
  border-top: 20px solid #613cb0;
  border-radius: 16px;
}
.title { margin: 0; font-size: 64px; line-height: 80px; font-weight: 400; letter-spacing: -.05px; color: #202124; }
.message { margin: 30px 0 0; font-size: 28px; line-height: 44px; letter-spacing: .4px; color: #202124; }
.button {
  margin-top: 47px;
  width: 292px;
  height: 72px;
  border-radius: 8px;
  background: #613cb0;
  color: #fff;
  font: 500 29px/72px Lato, Inter, sans-serif;
  letter-spacing: .9px;
  text-align: center;
}
.again { margin-top: 19px; font-size: 28px; line-height: 44px; color: #3474e0; text-decoration: underline; text-decoration-thickness: 2px; }
.origin { margin: 30px 0 0; font-size: 24px; line-height: 32px; color: #535158; }
.abuse { text-decoration: underline; text-decoration-thickness: 2px; }
.brand { margin-top: 34px; height: 60px; display: flex; align-items: baseline; gap: 9px; color: #6f6c73; font-family: Lato, sans-serif; line-height: 60px; }
.brand-google { font-size: 48px; letter-spacing: -.5px; -webkit-text-stroke: 1.200px #6f6c73; }
.brand-forms { font-size: 43.500px; }

/* Dock */
.shelf {
  flex: 1;
  display: flex;
  justify-content: center;
  align-items: flex-start;
  padding-top: 1px;
  background:
    radial-gradient(140px 100px at 150px 0, rgba(25, 35, 5, .75), transparent),
    radial-gradient(150px 100px at 2730px 0, rgba(20, 35, 5, .75), transparent);
}
.dock {
  width: 2580px;
  height: 111px;
  padding: 14px 3.500px 0;
  display: flex;
  align-items: flex-start;
  border-radius: 36px;
  border: 2px solid rgba(255, 255, 255, .2);
  box-shadow: 0 0 0 1px rgba(20, 30, 0, .5);
  background: linear-gradient(rgba(0, 0, 0, .1), transparent 70%), linear-gradient(90deg, #63801b 0, #647f1b 500px, #5b791c 1200px, #4f701b 1900px, #426018 2500px);
  background-clip: border-box;
  background-origin: border-box;
}
.app { position: relative; flex: none; width: 92px; height: 94px; display: flex; justify-content: center; }
.icon { width: 71px; height: 72px; filter: drop-shadow(0 1px 2px rgba(0, 0, 0, .35)); }
.running::after { content: ""; position: absolute; left: 42px; top: 82px; width: 8px; height: 8px; border-radius: 50%; background: #ddf792; }
.badge {
  position: absolute;
  left: 25px;
  top: -8px;
  width: 66px;
  height: 34px;
  border-radius: 17px;
  background: #e2503f;
  color: #fff;
  font-size: 18px;
  line-height: 34px;
  text-align: center;
  letter-spacing: -.3px;
  box-shadow: 0 1px 3px rgba(0, 0, 0, .3);
}
.dock-rule { flex: none; width: 2px; height: 82px; margin: -2px 19px 0 21px; background: #87a24e; }
.dock-rule-first { margin: -2px 18px 0 22px; }
.petals rect { mix-blend-mode: multiply; opacity: .9; }
.cal-month { font-size: 14.500px; font-weight: 600; fill: #fff; text-anchor: middle; }
.cal-day { font-size: 44px; font-weight: 300; fill: #222; text-anchor: middle; }
.tv-word { font-size: 30px; font-weight: 500; fill: #f3f4f4; }
.at { font-size: 24px; fill: #666; text-anchor: middle; }
```
